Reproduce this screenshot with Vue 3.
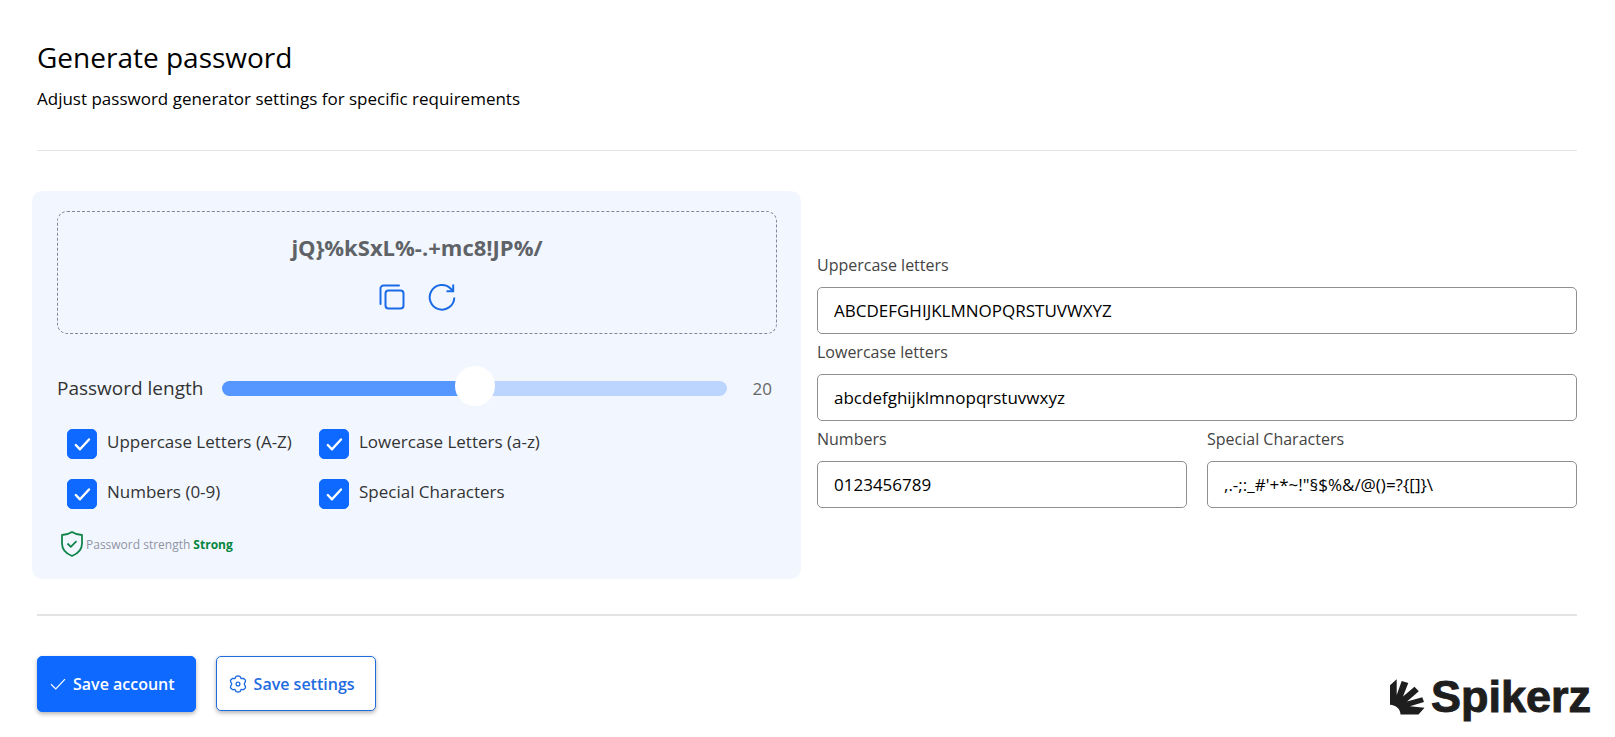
<script setup>
import { ref, computed } from 'vue'

const length = ref(20)
const min = 4
const max = 36
const fill = computed(() => `${((length.value - min) / (max - min)) * 100}%`)

const options = ref([
  { id: 'opt-upper', label: 'Uppercase Letters (A-Z)', on: true },
  { id: 'opt-lower', label: 'Lowercase Letters (a-z)', on: true },
  { id: 'opt-num', label: 'Numbers (0-9)', on: true },
  { id: 'opt-special', label: 'Special Characters', on: true },
])

const fields = ref([
  { id: 'set-upper', label: 'Uppercase letters', value: 'ABCDEFGHIJKLMNOPQRSTUVWXYZ', wide: true },
  { id: 'set-lower', label: 'Lowercase letters', value: 'abcdefghijklmnopqrstuvwxyz', wide: true },
  { id: 'set-num', label: 'Numbers', value: '0123456789', wide: false },
  { id: 'set-special', label: 'Special Characters', value: ',.-;:_#\'+*~!"§$%&/@()=?{[]}\\', wide: false },
])
</script>

<template>
  <main class="page">
    <header class="head">
      <h1>Generate password</h1>
      <p>Adjust password generator settings for specific requirements</p>
    </header>

    <div class="columns">
      <section class="panel">
        <div class="result">
          <output class="password">jQ}%kSxL%-.+mc8!JP%/</output>
          <div class="tools">
            <button type="button" class="tool" aria-label="Copy password">
              <svg width="28" height="28" viewBox="0 0 28 28" fill="none" stroke="#1a6be6" stroke-width="2" stroke-linecap="round">
                <rect x="7.500" y="7.500" width="18" height="18" rx="3" />
                <path d="M2.500 21V5.500a3 3 0 0 1 3-3h15.500" />
              </svg>
            </button>
            <button type="button" class="tool" aria-label="Generate again">
              <svg width="28" height="28" viewBox="0 0 28 28" fill="none" stroke="#1a6be6" stroke-width="2">
                <path d="M26.300 14.500A12.300 12.300 0 1 1 22.800 5.700L25 8" />
                <path d="M25.200 1.500v6.700h-6.700" />
              </svg>
            </button>
          </div>
        </div>

        <div class="length">
          <label for="length">Password length</label>
          <input id="length" v-model.number="length" type="range" :min="min" :max="max" :style="{ '--fill': fill }" />
          <output for="length">{{ length }}</output>
        </div>

        <div class="options">
          <label v-for="o in options" :key="o.id" :for="o.id" class="option">
            <span class="box">
              <input :id="o.id" v-model="o.on" type="checkbox" />
              <svg v-if="o.on" width="30" height="30" viewBox="0 0 30 30" fill="none" stroke="#fff" stroke-width="2.400" stroke-linecap="round" stroke-linejoin="round">
                <path d="M8.800 16l4.200 4.300L22 10.500" />
              </svg>
            </span>
            <span>{{ o.label }}</span>
          </label>
        </div>

        <div class="strength">
          <svg width="24" height="28" viewBox="0 0 24 28" fill="none" stroke="#12854a" stroke-width="1.800" stroke-linejoin="round">
            <path d="M12 2c3 2 6.500 3 10 3v8.500c0 5.700-3.700 10-10 12.500C5.700 23.500 2 19.200 2 13.500V5c3.500 0 7-1 10-3z" />
            <path d="M7.500 13.500l3.300 3.300 5.700-5.600" />
          </svg>
          <span>Password strength</span>
          <strong>Strong</strong>
        </div>
      </section>

      <section class="sets">
        <div v-for="f in fields" :key="f.id" class="field" :class="{ wide: f.wide }">
          <label :for="f.id">{{ f.label }}</label>
          <input :id="f.id" v-model="f.value" type="text" spellcheck="false" />
        </div>
      </section>
    </div>

    <footer class="foot">
      <div class="actions">
        <button type="button" class="btn primary">
          <svg width="16" height="16" viewBox="0 0 16 16" fill="none" stroke="#fff" stroke-width="1.200">
            <path d="M1 8.300l4.800 4.600L15 3.200" />
          </svg>
          Save account
        </button>
        <button type="button" class="btn outline">
          <svg width="18" height="18" viewBox="0 0 18 18" fill="none" stroke="#1f6be0" stroke-width="1.300" stroke-linejoin="round">
            <path d="M9 0.900L11 1.400L12 3.500L14.500 3.300L16.500 5.200L16.400 6.600L15.200 9L16.400 11.400L16.500 12.800L14.500 14.700L12 14.500L11 16.600L9 17.100L7 16.600L6 14.500L3.500 14.700L1.500 12.800L1.600 11.400L2.800 9L1.600 6.600L1.500 5.200L3.500 3.300L6 3.500L7 1.400z" />
            <circle cx="9" cy="9" r="1.900" />
          </svg>
          Save settings
        </button>
      </div>
      <div class="brand">
        <svg width="35" height="36" viewBox="0 0 35 36" fill="#1e1e1e">
          <path d="M0 6.300L6.700 0.300V16L11.700 2L18.300 4L13 17.500L24.500 7.700L28.800 12.300L17 22.500L32.300 18.300L34 23L20 27.300L34.500 28.700L28.500 35.500H10.500C10.500 30 6 26 0 25.700z" />
        </svg>
        <span>Spikerz</span>
      </div>
    </footer>
  </main>
</template>

<style>
body {
  margin: 0;
  background: #fff;
}
</style>

<style scoped>
.page,
.page * {
  box-sizing: border-box;
}

.page {
  min-height: 100vh;
  padding: 32px 38px 0 32px;
  font-family: "Open Sans", "Noto Sans", sans-serif;
  font-size: 17px;
  color: #333;
}

.page button,
.page input {
  font-family: inherit;
  font-size: inherit;
}

.head {
  margin-left: 5px;
  padding: 4px 0 32px;
  border-bottom: 1px solid #e5e5e5;
  color: #000;
}

h1 {
  margin: 0;
  font-size: 28px;
  line-height: 42px;
  font-weight: 400;
}

.head p {
  margin: 9px 0 7px;
  line-height: 24px;
}

.columns {
  display: grid;
  grid-template-columns: minmax(0, 769fr) minmax(0, 760fr);
  gap: 16px;
  margin-top: 40px;
  align-items: center;
}

.panel {
  padding: 20px 24px 20px 25px;
  border-radius: 10px;
  background: #f2f7ff;
}

.result {
  display: flex;
  flex-direction: column;
  align-items: center;
  height: 123px;
  padding-top: 20px;
  border: 1px dashed #84849c;
  border-radius: 10px;
}

.password {
  font-size: 22px;
  line-height: 30px;
  font-weight: 700;
  color: #5f6368;
}

.tools {
  display: flex;
  gap: 22px;
  margin-top: 21px;
}

.tool {
  display: flex;
  padding: 0;
  border: 0;
  background: none;
}

.length {
  display: flex;
  align-items: center;
  height: 40px;
  margin: 34px 5px 0 0;
}

.length label {
  width: 165px;
  flex: none;
  font-size: 19px;
}

.length input {
  flex: 1;
  min-width: 0;
  height: 40px;
  margin: 0;
  appearance: none;
  background: none;
}

.length input::-webkit-slider-runnable-track {
  height: 15px;
  border-radius: 8px;
  background: linear-gradient(to right, #5596ff var(--fill), #bcd5ff var(--fill));
}

.length input::-webkit-slider-thumb {
  appearance: none;
  width: 40px;
  height: 40px;
  margin-top: -15px;
  border-radius: 50%;
  background: #fff;
}

.length output {
  width: 45px;
  text-align: right;
  color: #666;
}

.options {
  display: grid;
  grid-template-columns: 252px 252px;
  row-gap: 20px;
  margin: 21px 0 0 10px;
}

.option {
  display: flex;
  gap: 10px;
  height: 30px;
  line-height: 26px;
  white-space: nowrap;
}

.box {
  position: relative;
  width: 30px;
  height: 30px;
}

.box input {
  display: block;
  width: 30px;
  height: 30px;
  margin: 0;
  appearance: none;
  border: 1px solid #0d69ff;
  border-radius: 5px;
}

.box input:checked {
  background: #0d69ff;
}

.box svg {
  position: absolute;
  inset: 0;
  pointer-events: none;
}

.strength {
  display: flex;
  align-items: center;
  margin: 21px 0 1px 3px;
  font-size: 12px;
  color: #9094a3;
}

.strength span {
  margin: 0 3px 0 2px;
}

.strength strong {
  color: #04853e;
}

.sets {
  display: grid;
  grid-template-columns: 1fr 1fr;
  column-gap: 20px;
  padding-bottom: 15px;
}

.field {
  display: flex;
  flex-direction: column;
  min-width: 0;
}

.wide {
  grid-column: span 2;
}

.field label {
  height: 40px;
  padding-top: 5px;
  font-size: 16px;
  line-height: 26px;
  color: #444;
}

.field input {
  width: 100%;
  height: 47px;
  padding: 0 16px;
  border: 1px solid #8f8f93;
  border-radius: 5px;
  background: #fff;
  color: #000;
}

.foot {
  display: flex;
  justify-content: space-between;
  align-items: flex-start;
  margin: 35px 0 0 5px;
  padding-top: 40px;
  border-top: 2px solid #e3e3e3;
}

.actions {
  display: flex;
  align-items: flex-start;
  gap: 20px;
}

.page .btn {
  display: flex;
  align-items: center;
  gap: 7px;
  height: 56px;
  padding: 0 20px 0 12px;
  border: 1px solid #0d69ff;
  border-radius: 5px;
  font-size: 16px;
  font-weight: 600;
  white-space: nowrap;
  box-shadow: 0 2px 4px rgba(0, 0, 0, 0.3);
}

.page .primary {
  background: #0d69ff;
  color: #fff;
}

.page .outline {
  height: 55px;
  border-color: #1f6be0;
  background: #fff;
  color: #1f6be0;
}

.brand {
  display: flex;
  align-items: flex-start;
  gap: 6px;
  margin: 23px -14px 0 0;
  font-family: "Liberation Sans", Arial, sans-serif;
  font-size: 45px;
  line-height: 36px;
  font-weight: 700;
  color: #1e1e1e;
  -webkit-text-stroke: 1px #1e1e1e;
}
</style>
